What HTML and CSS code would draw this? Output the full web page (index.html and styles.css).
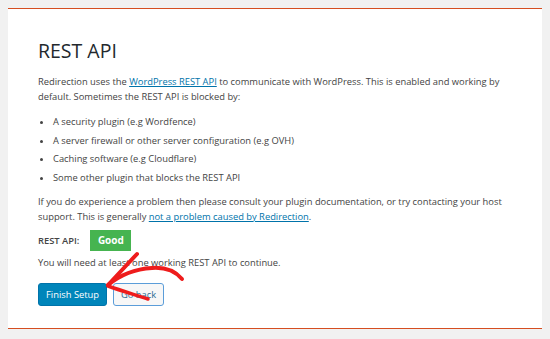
FILE: index.html
```html
<!DOCTYPE html>
<html>
<head>
  <title>Redirection - REST API</title>
  <link rel="stylesheet" href="styles.css">
</head>
<body>
  <div class="wizard">
    <h1 class="wizard-title">REST API</h1>
    <p class="wizard-text">Redirection uses the <a href="#">WordPress REST API</a> to communicate with WordPress. This is enabled and working by default. Sometimes the REST API is blocked by:</p>
    <ul class="wizard-list">
      <li>A security plugin (e.g Wordfence)</li>
      <li>A server firewall or other server configuration (e.g OVH)</li>
      <li>Caching software (e.g Cloudflare)</li>
      <li>Some other plugin that blocks the REST API</li>
    </ul>
    <p class="wizard-text">If you do experience a problem then please consult your plugin documentation, or try contacting your host support. This is generally <a href="#">not a problem caused by Redirection</a>.</p>
    <div class="api-status">
      <span class="api-label">REST API:</span>
      <span class="api-badge">Good</span>
    </div>
    <p class="wizard-text">You will need at least one working REST API to continue.</p>
    <div class="wizard-buttons">
      <button class="btn btn-primary">Finish Setup</button>
      <button class="btn btn-secondary">Go back</button>
      <svg class="arrow" width="100" height="60" viewBox="100 250 100 60">
        <path d="M108 286 C120 276 135 270 152 269 C166 268 176 273 182 280" fill="none" stroke="#ee1c1c" stroke-width="4" stroke-linecap="round"/>
        <path d="M108 286 L137 255" fill="none" stroke="#ee1c1c" stroke-width="4" stroke-linecap="round"/>
        <path d="M108 287 C122 292 136 296 148 300" fill="none" stroke="#ee1c1c" stroke-width="3.5" stroke-linecap="round"/>
      </svg>
    </div>
  </div>
</body>
</html>
```

FILE: styles.css
```css
body {
  margin: 8px;
  background-color: #f1f1f1;
  font-family: "Open Sans", "Noto Sans", sans-serif;
  color: #444;
}
.wizard {
  background-color: #fff;
  border-top: 1px solid #d54e21;
  border-bottom: 1px solid #d54e21;
  box-shadow: 0 1px 0 #f1c7b8;
  padding: 28px 30px 22px 30px;
}
.wizard-title {
  margin: 0 0 9px 0;
  font-size: 19.5px;
  line-height: 28px;
  font-weight: 400;
  color: #23282d;
}
.wizard-text {
  margin: 0;
  font-size: 9.35px;
  line-height: 15px;
}
.wizard-text a {
  color: #0073aa;
}
.wizard-list {
  margin: 10px 0 9px 0;
  padding-left: 15px;
  font-size: 9.35px;
  line-height: 15px;
}
.wizard-list li {
  margin-bottom: 3.5px;
}
.wizard-list li:last-child {
  margin-bottom: 0;
}
.api-status {
  display: flex;
  align-items: center;
  gap: 11px;
  margin: 6px 0 4px 0;
}
.api-label {
  font-size: 9.35px;
  font-weight: 600;
}
.api-badge {
  background-color: #46b450;
  color: #fff;
  font-size: 10px;
  font-weight: 700;
  width: 41px;
  height: 21px;
  line-height: 21px;
  text-align: center;
}
.wizard-buttons {
  position: relative;
  display: flex;
  gap: 6px;
  margin-top: 13px;
}
.btn {
  height: 23px;
  padding: 0 7px;
  font-family: inherit;
  font-size: 9.35px;
  border-radius: 3px;
  cursor: pointer;
}
.btn-primary {
  background-color: #0085ba;
  border: 1px solid #0073aa;
  color: #fff;
}
.btn-secondary {
  background-color: #f7f7f7;
  border: 1px solid #5b9dd9;
  color: #2b6a92;
}
.arrow {
  position: absolute;
  left: 62px;
  top: -34px;
}
```
